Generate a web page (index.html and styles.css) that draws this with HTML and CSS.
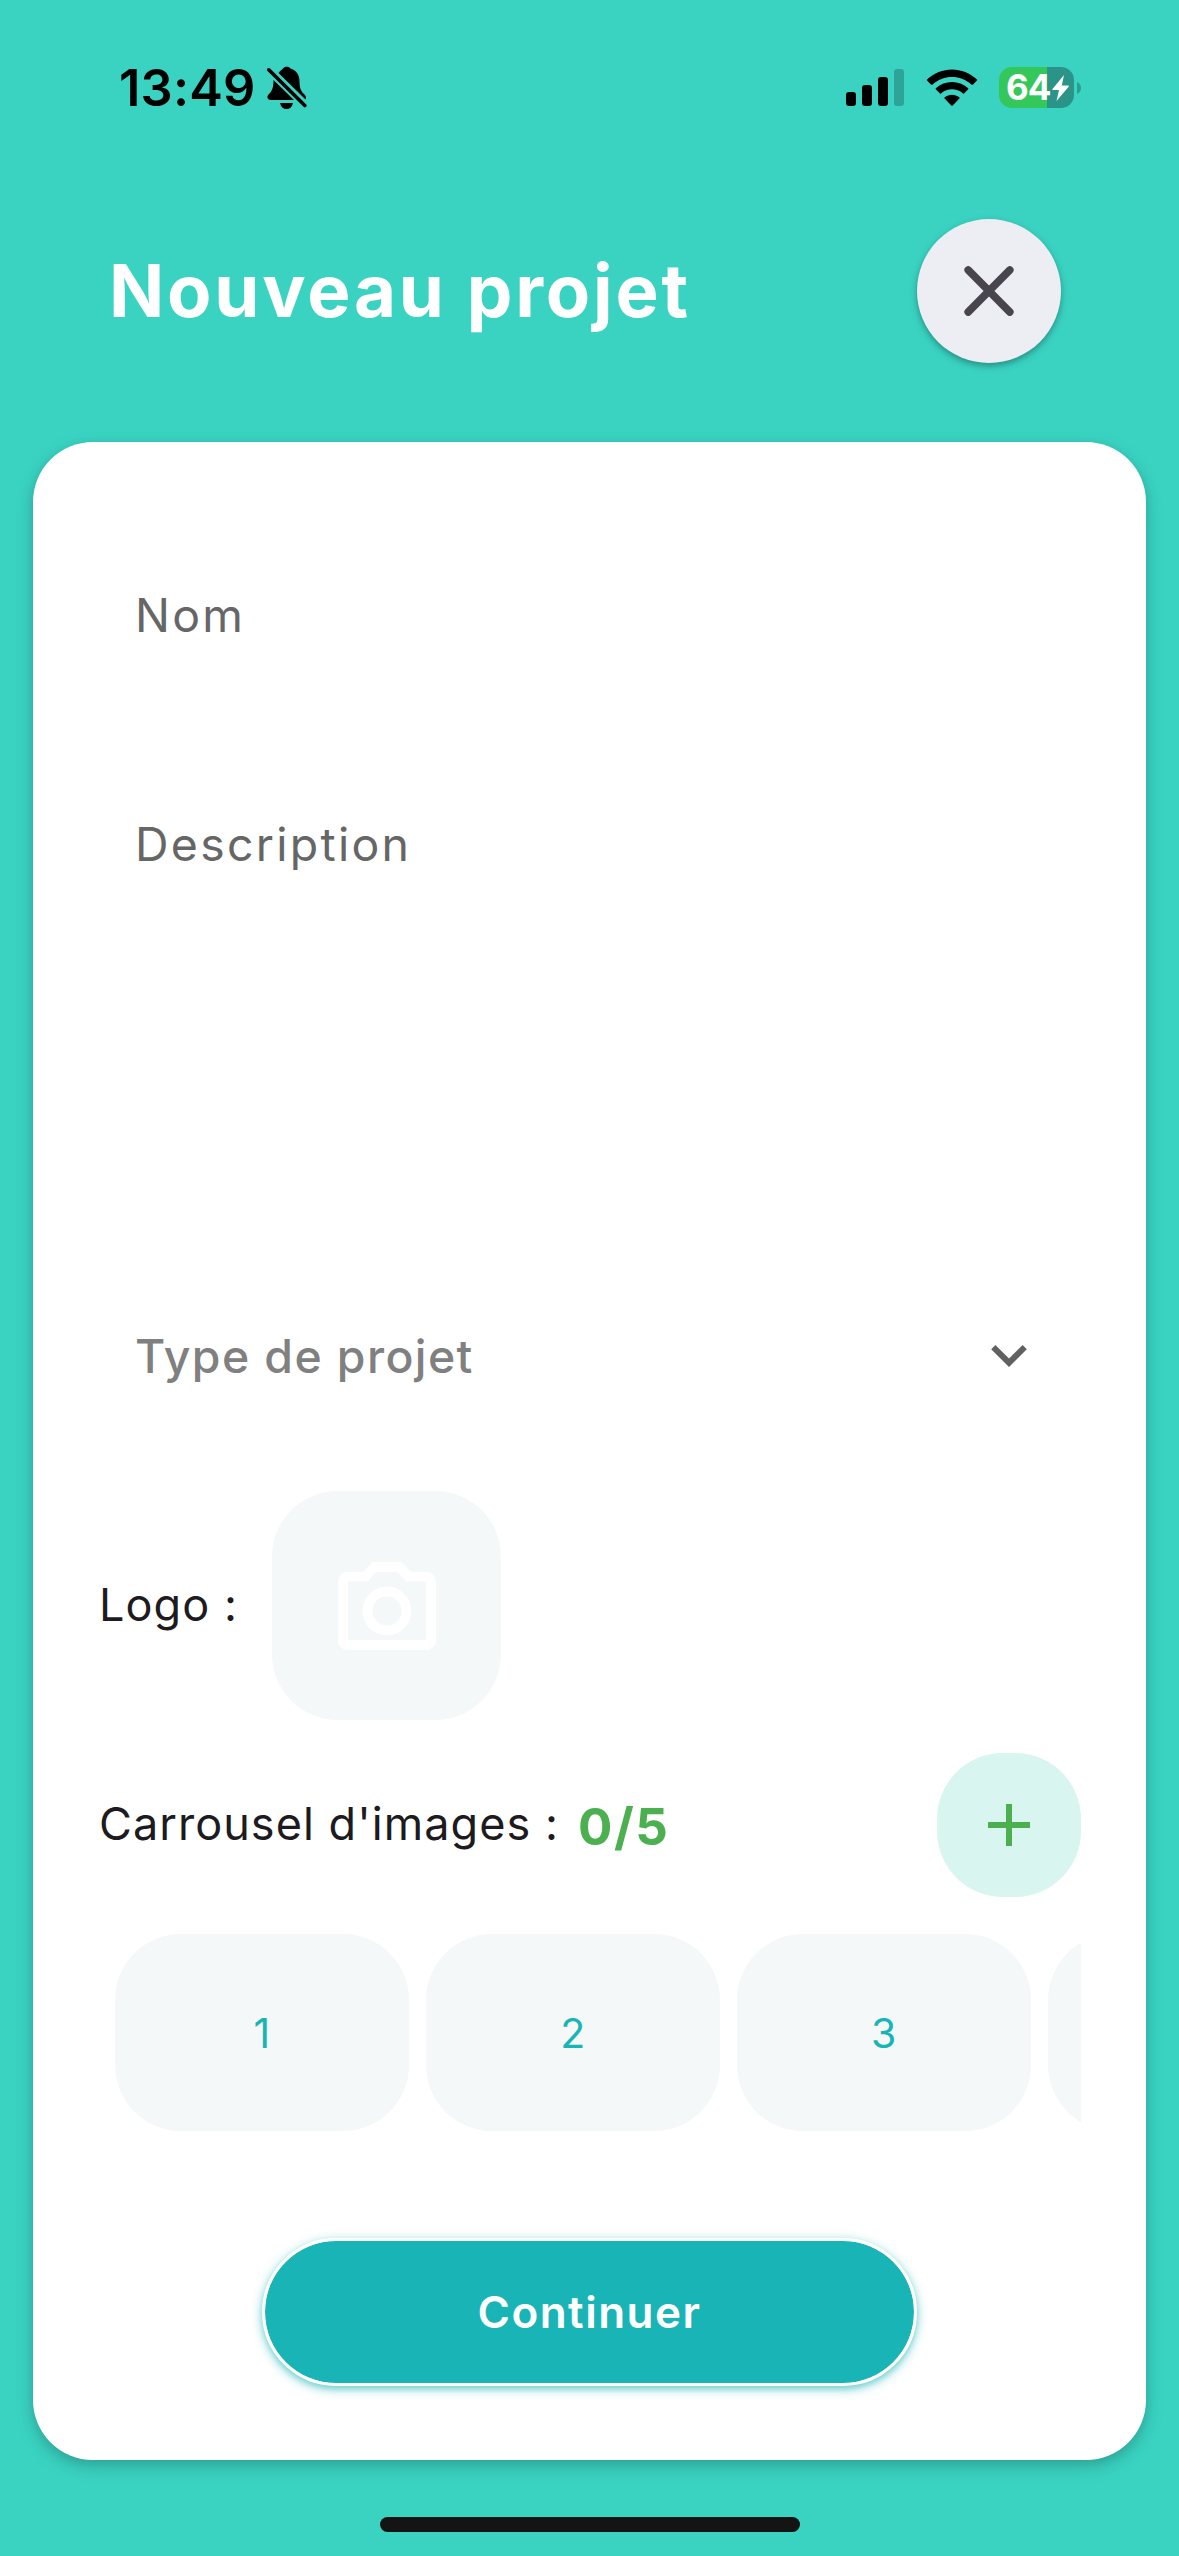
FILE: index.html
```html
<!DOCTYPE html>
<html lang="fr">
<head>
<meta charset="utf-8">
<title>Nouveau projet</title>
<link rel="stylesheet" href="styles.css">
</head>
<body>
<div class="screen">
  <div class="status">
    <div class="status-left">
      <span class="time">13:49</span>
      <svg class="bell" viewBox="0 0 40 44" width="40" height="44">
        <path d="M11.500 7C13.500 4.500 15.500 3.300 16 2.500C17.500.2 22 .2 23.500 2.500C29 4 32.500 9 32.500 15C32.500 23 34.500 26 38 29C39.500 31 39 32.500 38.500 33.500Z"/>
        <path d="M6.500 14L27 34H4C0 34 -.5 30.500 1.500 28.500C5 25 6.500 22 6.500 14Z"/>
        <path d="M13 37H26C25 41 23 43 19.500 43S14 41 13 37Z"/>
        <path class="slash" d="M1.800 3.800L37.800 39.500"/>
      </svg>
    </div>
    <div class="status-right">
      <svg class="signal" viewBox="0 0 58 37" width="58" height="37">
        <rect x="0" y="23" width="10" height="14" rx="3"/>
        <rect x="16" y="16" width="10" height="21" rx="3"/>
        <rect x="32" y="8" width="10" height="29" rx="3"/>
        <rect class="dim" x="48" y="0" width="10" height="37" rx="3"/>
      </svg>
      <svg class="wifi" viewBox="0 0 52 38" width="52" height="38">
        <path d="M1 10.500C15 -3 37 -3 51 10.500Q51.500 11 51 11.500L46.800 15.700Q46.300 16 45.800 15.700C34.500 5.300 17.500 5.300 6.200 15.700Q5.700 16 5.200 15.700L1 11.500Q.5 11 1 10.500Z"/>
        <path d="M9.800 19.300C19 10.800 33 10.800 42.200 19.300Q42.700 19.800 42.200 20.300L38 24.400Q37.500 24.900 37 24.500C30.500 18.900 21.500 18.900 15 24.500Q14.500 24.900 14 24.400L9.800 20.300Q9.300 19.800 9.800 19.300Z"/>
        <path d="M18.700 28.200C23 24.800 29 24.800 33.300 28.200Q34 28.800 33.400 29.400L26.700 36.500Q26 37.200 25.300 36.500L18.600 29.400Q18 28.800 18.700 28.200Z"/>
      </svg>
      <div class="battery">
        <div class="battery-body">
          <span class="level">64</span>
          <svg class="bolt" viewBox="0 0 17 26" width="17" height="26"><path d="M12 0L.3 14.200Q0 15 .8 15H7L4.500 26L16.800 11.500Q17 10.500 16.300 10.500H9.800Z"/></svg>
        </div>
        <svg class="nub" viewBox="0 0 4 12" width="4" height="12"><path d="M0 0Q4 1.800 4 6T0 12Z"/></svg>
      </div>
    </div>
  </div>

  <header class="header">
    <h1 class="title">Nouveau projet</h1>
    <button class="close" aria-label="Fermer">
      <svg viewBox="0 0 50 50" width="50" height="50"><path d="M4.200 4L45.800 46M45.800 4L4.200 46"/></svg>
    </button>
  </header>

  <main class="card">
    <div class="field"><span class="label">Nom</span></div>
    <div class="field area"><span class="label description">Description</span></div>
    <div class="field select">
      <span class="placeholder">Type de projet</span>
      <svg class="chevron" viewBox="6 8.590 12 7.410" width="36" height="22"><path d="M7.410 8.590L12 13.170l4.590-4.580L18 10l-6 6-6-6z"/></svg>
    </div>

    <div class="logo-row">
      <span class="text logo-label">Logo :</span>
      <div class="logo-box">
        <svg class="camera" viewBox="2 2 20 18" width="98" height="88"><path d="M14.120 4l1.830 2H20v12H4V6h4.050l1.830-2h4.240M15 2H9L7.170 4H4c-1.100 0-2 .9-2 2v12c0 1.100.9 2 2 2h16c1.100 0 2-.9 2-2V6c0-1.100-.9-2-2-2h-3.170L15 2zm-3 7c1.650 0 3 1.350 3 3s-1.350 3-3 3-3-1.350-3-3 1.350-3 3-3m0-2c-2.760 0-5 2.240-5 5s2.240 5 5 5 5-2.240 5-5-2.240-5-5-5z"/></svg>
      </div>
    </div>

    <div class="carousel-head">
      <span class="text carousel-label">Carrousel d'images :</span>
      <span class="count">0/5</span>
      <button class="add" aria-label="Ajouter">
        <svg viewBox="0 0 42 42" width="42" height="42"><path d="M21 0V42M0 21H42"/></svg>
      </button>
    </div>

    <div class="carousel">
      <div class="tile">1</div>
      <div class="tile">2</div>
      <div class="tile">3</div>
      <div class="tile"></div>
    </div>

    <button class="submit"><span class="submit-text">Continuer</span></button>
  </main>

  <div class="home"></div>
</div>
</body>
</html>
```
FILE: styles.css
```css
* { box-sizing: border-box; }

body {
  margin: 0;
  font-family: Inter, "Liberation Sans", sans-serif;
}

svg { display: block; flex: none; }

button {
  border: 0;
  padding: 0;
  font: inherit;
  display: flex;
  align-items: center;
  justify-content: center;
}

.screen {
  width: 1179px;
  height: 2556px;
  background: #3ad3c2;
  display: flex;
  flex-direction: column;
  overflow: hidden;
}

/* Status bar */
.status {
  height: 175px;
  padding: 0 98px 0 119px;
  display: flex;
  align-items: center;
  justify-content: space-between;
}
.status-left, .status-right, .battery { display: flex; align-items: center; }
.time {
  width: 148px;
  font-size: 50.500px;
  line-height: 60px;
  font-weight: 600;
  letter-spacing: .2px;
  white-space: nowrap;
}
.bell .slash { fill: none; stroke: #000; stroke-width: 3.6; stroke-linecap: round; }
.dim { opacity: .22; }
.wifi { margin-left: 22px; }
.battery { margin-left: 21px; gap: 3px; }
.battery-body {
  width: 75px;
  height: 41px;
  padding-left: 7px;
  border-radius: 13px;
  background: linear-gradient(90deg, #34c759 48px, #2b9488 48px);
  display: flex;
  align-items: center;
}
.level {
  width: 46px;
  color: #fff;
  font-size: 35px;
  line-height: 41px;
  font-weight: 700;
  letter-spacing: -1px;
}
.bolt { fill: #fff; }
.nub { fill: #2b9f92; }

/* Header */
.header {
  height: 267px;
  padding: 44px 118.500px 0 109px;
  display: flex;
  align-items: flex-start;
  justify-content: space-between;
}
.title {
  margin: 0;
  font-size: 72.500px;
  line-height: 144px;
  font-weight: 700;
  letter-spacing: 2.800px;
  color: #fff;
  white-space: nowrap;
}
.close {
  width: 144px;
  height: 144px;
  border-radius: 50%;
  background: #edeef3;
  box-shadow: 0 3px 9px rgba(0, 0, 0, .22), 0 3px 4px rgba(0, 0, 0, .12);
}
.close path { fill: none; stroke: #48454e; stroke-width: 7.600; stroke-linecap: round; }

/* Form card */
.card {
  height: 2018px;
  margin: 0 33px;
  padding: 101px 65px 0 66px;
  border-radius: 60px;
  background: #fff;
  box-shadow: 0 6px 18px rgba(0, 0, 0, .2), 0 3px 9px rgba(0, 0, 0, .06);
  display: flex;
  flex-direction: column;
}
.field {
  height: 144px;
  padding: 0 37px 0 36px;
  display: flex;
  align-items: flex-start;
}
.label, .placeholder {
  font-size: 46.400px;
  line-height: 144px;
  white-space: nowrap;
  letter-spacing: 2.300px;
  color: #666;
}
.area { height: 427px; margin: 85px 0; }
.select { align-items: center; justify-content: space-between; padding-right: 54px; }
.placeholder { font-weight: 500; letter-spacing: 1.400px; color: #808080; }
.chevron { fill: #616161; }

.text {
  padding-bottom: 2px;
  font-size: 45px;
  line-height: 60px;
  letter-spacing: 1.050px;
  color: #1d1b20;
  white-space: nowrap;
}
.logo-row { margin-top: 63px; display: flex; align-items: center; }
.logo-label { width: 173px; }
.logo-box {
  width: 229px;
  height: 229px;
  border-radius: 66px;
  background: #f4f8f8;
  display: flex;
  align-items: center;
  justify-content: center;
}
.camera { fill: #fff; }

.carousel-head { margin-top: 33px; display: flex; align-items: center; }
.carousel-label { width: 479px; }
.count {
  padding-top: 3px;
  font-size: 51px;
  line-height: 60px;
  font-weight: 700;
  letter-spacing: 1.500px;
  color: #4caf50;
}
.add {
  width: 144px;
  height: 144px;
  margin-left: auto;
  border-radius: 66px;
  background: #d8f5f0;
}
.add path { stroke: #4caf50; stroke-width: 6; }

.carousel {
  margin-top: 37px;
  padding-left: 15.500px;
  display: flex;
  gap: 16.500px;
  overflow: hidden;
}
.tile {
  flex: none;
  width: 294.500px;
  height: 197px;
  border-radius: 66px;
  background: #f4f8f8;
  color: #19b4b6;
  font-size: 41px;
  display: flex;
  align-items: center;
  justify-content: center;
}

.submit {
  width: 655px;
  height: 148px;
  margin: 107px 0 0 163px;
  border: 3px solid #fff;
  border-radius: 74px;
  background: #19b4b5;
  background-clip: padding-box;
  box-shadow: 0 3px 10px 1px rgba(25, 180, 181, .5), 0 3px 4px rgba(25, 180, 181, .2);
}
.submit-text {
  color: #fff;
  font-size: 44px;
  font-weight: 600;
  letter-spacing: 1.500px;
}

.home {
  width: 420px;
  height: 15px;
  margin: 57px auto 0;
  border-radius: 8px;
  background: #141414;
}
```
